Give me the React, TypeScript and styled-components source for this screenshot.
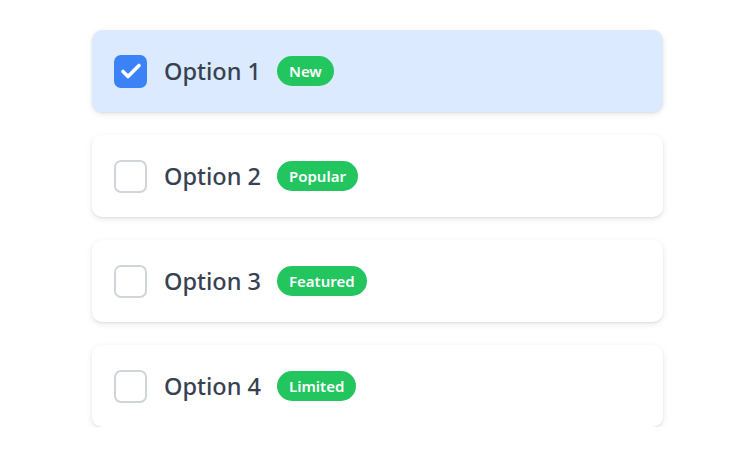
import { useState } from "react";
import styled, { createGlobalStyle } from "styled-components";

const GlobalStyle = createGlobalStyle`
  body {
    margin: 0;
    background: #fff;
    font-family: "Noto Sans", "Open Sans", sans-serif;
  }
`;

const Page = styled.div`
  padding: 30px 0 0 92px;
`;

const List = styled.div`
  display: flex;
  flex-direction: column;
  gap: 23px;
  width: 571px;
`;

const Card = styled.label<{ $checked: boolean }>`
  display: flex;
  align-items: center;
  height: 82px;
  padding: 0 22px;
  box-sizing: border-box;
  border-radius: 10px;
  background: ${(p) => (p.$checked ? "#dbeafe" : "#fff")};
  box-shadow: 0 2px 6px rgba(0, 0, 0, 0.1), 0 1px 2px rgba(0, 0, 0, 0.06);
  cursor: pointer;
`;

const Box = styled.span<{ $checked: boolean }>`
  display: flex;
  align-items: center;
  justify-content: center;
  width: 33px;
  height: 33px;
  box-sizing: border-box;
  border-radius: 7px;
  border: 2px solid ${(p) => (p.$checked ? "#3b82f6" : "#d1d5db")};
  background: ${(p) => (p.$checked ? "#3b82f6" : "#fff")};
  flex-shrink: 0;
`;

const Label = styled.span`
  margin-left: 17px;
  font-size: 23.5px;
  font-weight: 500;
  color: #374151;
`;

const Badge = styled.span`
  margin-left: 16px;
  height: 30px;
  display: flex;
  align-items: center;
  padding: 0 12px;
  border-radius: 15px;
  background: #22c55e;
  color: #fff;
  font-size: 15px;
  font-weight: 600;
`;

const options = [
  { label: "Option 1", badge: "New" },
  { label: "Option 2", badge: "Popular" },
  { label: "Option 3", badge: "Featured" },
  { label: "Option 4", badge: "Limited" },
];

export default function App() {
  const [selected, setSelected] = useState<number[]>([0]);

  const toggle = (i: number) =>
    setSelected((s) => (s.includes(i) ? s.filter((x) => x !== i) : [...s, i]));

  return (
    <Page>
      <GlobalStyle />
      <List>
        {options.map((o, i) => {
          const checked = selected.includes(i);
          return (
            <Card key={o.label} $checked={checked} onClick={() => toggle(i)}>
              <Box $checked={checked}>
                {checked && (
                  <svg width="22" height="18" viewBox="0 0 22 18" fill="none">
                    <path
                      d="M3 9.5l5 5L19 3.5"
                      stroke="#fff"
                      strokeWidth="3.6"
                      strokeLinecap="round"
                      strokeLinejoin="round"
                    />
                  </svg>
                )}
              </Box>
              <Label>{o.label}</Label>
              <Badge>{o.badge}</Badge>
            </Card>
          );
        })}
      </List>
    </Page>
  );
}
